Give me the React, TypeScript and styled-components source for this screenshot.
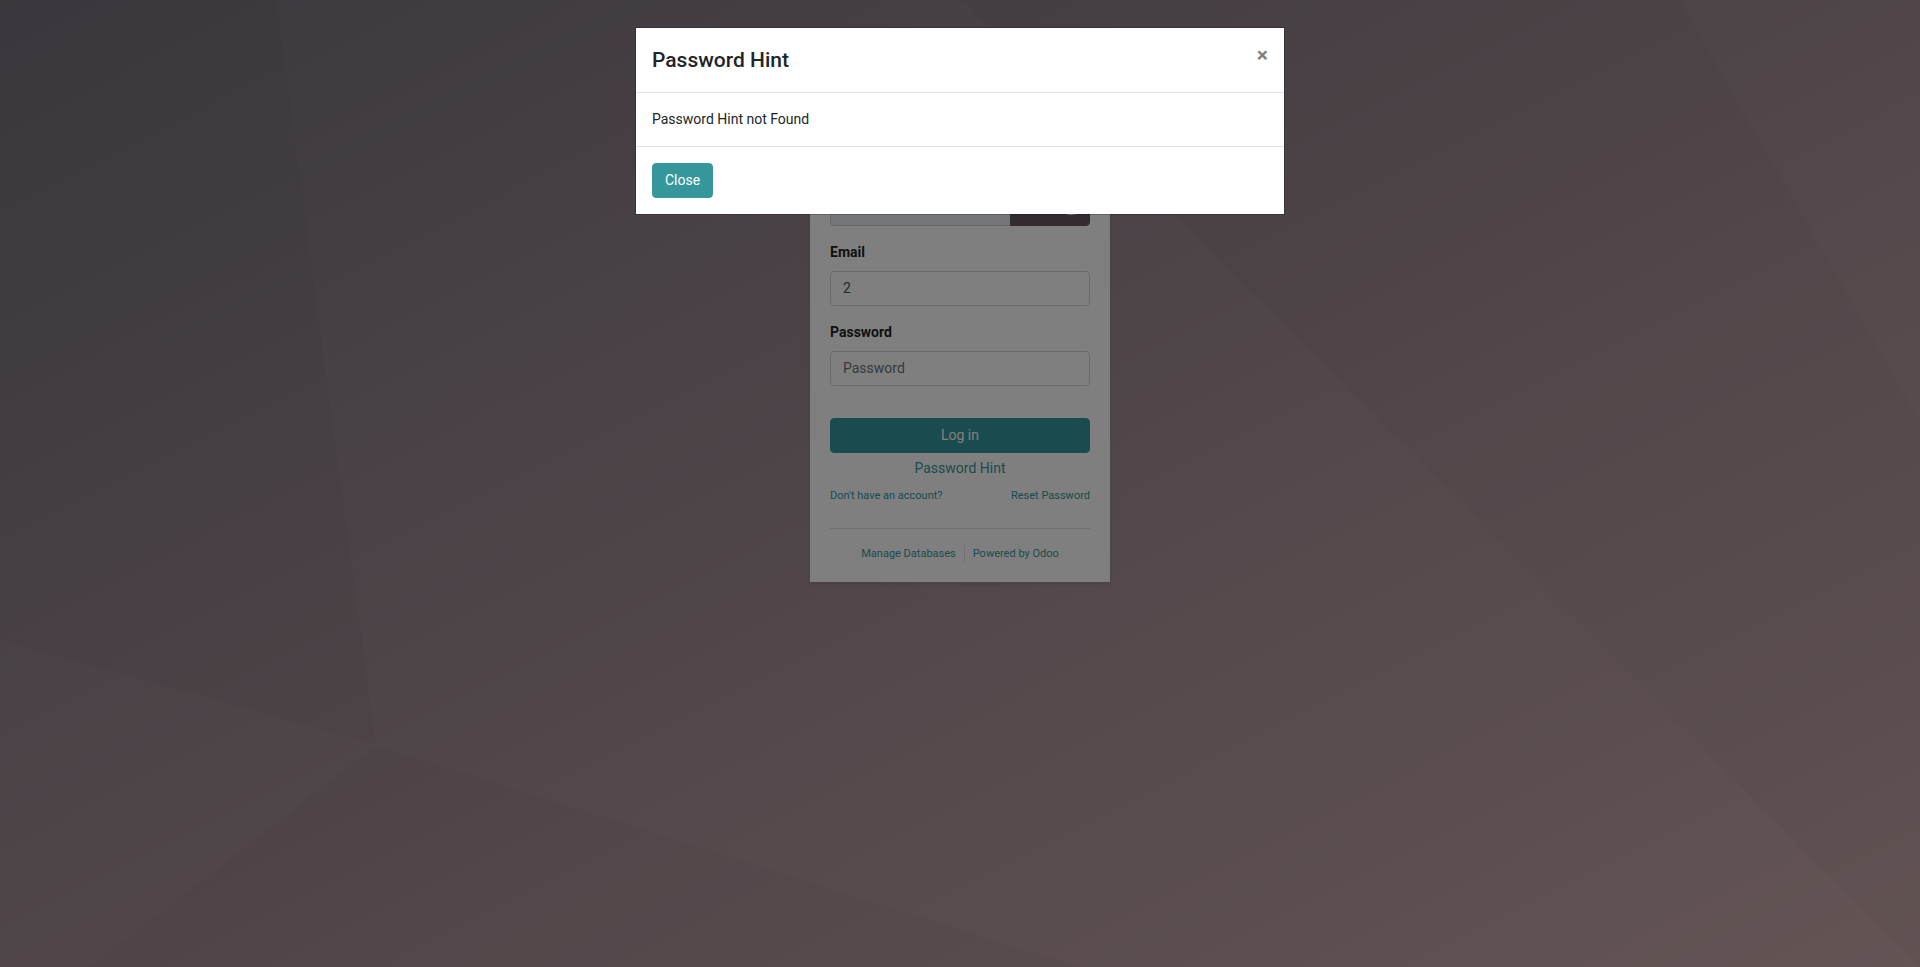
import React from "react";
import styled, { createGlobalStyle } from "styled-components";

const GlobalStyle = createGlobalStyle`
  *, *::before, *::after { box-sizing: border-box; }
  body {
    margin: 0;
    font-family: Roboto, "Noto Sans", sans-serif;
    font-size: 14px;
    line-height: 21px;
    color: #212529;
    background: #77717e;
  }
  button, input { font: inherit; }
`;

const Page = styled.div`
  position: relative;
  min-height: 100vh;
  background: linear-gradient(to bottom right, #77717e, #c9a8a9);
`;

const Facets = styled.svg`
  position: absolute;
  inset: 0;
  width: 100%;
  height: 100%;
`;

const Main = styled.main`
  position: relative;
  padding-top: 171px;
`;

const Card = styled.form`
  width: 300px;
  margin: 0 auto;
  padding: 20px;
  background: #fff;
  box-shadow: 0 2px 4px rgba(0, 0, 0, 0.1);
`;

const InputGroup = styled.div`
  display: flex;
  margin-bottom: 16px;
`;

const Field = styled.div`
  margin-bottom: 16px;
`;

const Label = styled.label`
  display: block;
  margin-bottom: 8px;
  font-weight: 700;
`;

const Input = styled.input`
  display: block;
  width: 100%;
  min-width: 0;
  height: 35px;
  padding: 5px 12px 7px;
  color: #495057;
  background: #fff;
  border: 1px solid #ced4da;
  border-radius: 4px;
  &::placeholder { color: #6c757d; opacity: 1; }
  &:read-only { background: #e9ecef; border-radius: 4px 0 0 4px; border-right: 0; }
`;

const SelectButton = styled.button`
  display: flex;
  flex: 0 0 80px;
  align-items: center;
  justify-content: flex-end;
  padding: 5px 12px 7px;
  color: #fff;
  background: #685563;
  border: 1px solid #685563;
  border-radius: 0 4px 4px 0;
`;

const Button = styled.button<{ $block?: boolean }>`
  display: block;
  width: ${(p) => (p.$block ? "100%" : "auto")};
  height: 35px;
  padding: 6px 12px;
  color: #fff;
  background: #35979c;
  border: 1px solid #35979c;
  border-radius: 4px;
  cursor: pointer;
`;

const Actions = styled.div`
  padding-top: 16px;
`;

const Link = styled.a`
  color: #35979c;
  text-decoration: none;
`;

const HintRow = styled.div`
  margin-top: 5px;
  text-align: center;
`;

const SmallRow = styled.div<{ $center?: boolean }>`
  display: flex;
  justify-content: ${(p) => (p.$center ? "center" : "space-between")};
  font-size: 11px;
  line-height: 17px;
`;

const AccountRow = styled(SmallRow)`
  margin-top: 8px;
`;

const CardFooter = styled.footer`
  margin-top: 24px;
  padding-top: 16px;
  border-top: 1px solid #e0e0e0;
`;

const FooterLink = styled(Link)`
  & + & {
    margin-left: 8px;
    padding-left: 8px;
    border-left: 1px solid #dee2e6;
  }
`;

const Backdrop = styled.div`
  position: absolute;
  inset: 0;
  padding: 27px 16px;
  background: rgba(0, 0, 0, 0.5);
`;

const Dialog = styled.section`
  max-width: 650px;
  margin: 0 auto;
  background: #fff;
  background-clip: padding-box;
  border: 1px solid rgba(0, 0, 0, 0.2);
`;

const DialogHeader = styled.header`
  display: flex;
  justify-content: space-between;
  align-items: flex-start;
  padding: 16px;
  border-bottom: 1px solid #dee2e6;
`;

const DialogTitle = styled.h4`
  margin: 0;
  font-size: 21px;
  line-height: 32px;
  font-weight: 500;
`;

const CloseIcon = styled.button`
  padding: 0;
  border: 0;
  background: none;
  color: #000;
  opacity: 0.5;
  font-size: 21px;
  line-height: 23px;
  font-weight: 700;
  cursor: pointer;
`;

const DialogBody = styled.div`
  padding: 16px;
`;

const DialogFooter = styled.footer`
  padding: 16px;
  border-top: 1px solid #dee2e6;
`;

export default function App() {
  return (
    <Page>
      <GlobalStyle />
      <Facets viewBox="0 0 1920 967" preserveAspectRatio="none" aria-hidden="true">
        <g fill="#000" fillOpacity="0.025">
          <polygon points="0,0 276,0 376,745 0,640" />
          <polygon points="376,745 1080,967 90,967" />
          <polygon points="962,0 1680,0 1920,421 1920,967" />
        </g>
      </Facets>
      <Main>
        <Card onSubmit={(e) => e.preventDefault()}>
          <InputGroup>
            <Input aria-label="Database" readOnly />
            <SelectButton type="button" aria-label="Select database">
              <svg width="12" height="14" viewBox="0 0 12 14" fill="currentColor" aria-hidden="true">
                <ellipse cx="6" cy="2" rx="6" ry="2" />
                <path d="M0 3.6c1.200 1 3.400 1.400 6 1.400s4.800-.4 6-1.400V5c0 1.100-2.700 2-6 2S0 6.100 0 5z" />
                <path d="M0 6.600c1.200 1 3.400 1.400 6 1.400s4.800-.4 6-1.400V8c0 1.100-2.700 2-6 2S0 9.100 0 8z" />
                <path d="M0 9.600c1.200 1 3.400 1.400 6 1.400s4.800-.4 6-1.400V12c0 1.100-2.700 2-6 2s-6-.9-6-2z" />
              </svg>
            </SelectButton>
          </InputGroup>
          <Field>
            <Label htmlFor="login">Email</Label>
            <Input id="login" type="text" defaultValue="2" />
          </Field>
          <Field>
            <Label htmlFor="password">Password</Label>
            <Input id="password" type="password" placeholder="Password" />
          </Field>
          <Actions>
            <Button type="submit" $block>Log in</Button>
            <HintRow>
              <Link href="#hint">Password Hint</Link>
            </HintRow>
            <AccountRow>
              <Link href="#signup">Don't have an account?</Link>
              <Link href="#reset">Reset Password</Link>
            </AccountRow>
          </Actions>
          <CardFooter>
            <SmallRow $center>
              <FooterLink href="#databases">Manage Databases</FooterLink>
              <FooterLink href="#odoo">Powered by Odoo</FooterLink>
            </SmallRow>
          </CardFooter>
        </Card>
      </Main>
      <Backdrop>
        <Dialog role="dialog" aria-modal="true" aria-labelledby="dialog-title">
          <DialogHeader>
            <DialogTitle id="dialog-title">Password Hint</DialogTitle>
            <CloseIcon type="button" aria-label="Close">×</CloseIcon>
          </DialogHeader>
          <DialogBody>Password Hint not Found</DialogBody>
          <DialogFooter>
            <Button type="button">Close</Button>
          </DialogFooter>
        </Dialog>
      </Backdrop>
    </Page>
  );
}
